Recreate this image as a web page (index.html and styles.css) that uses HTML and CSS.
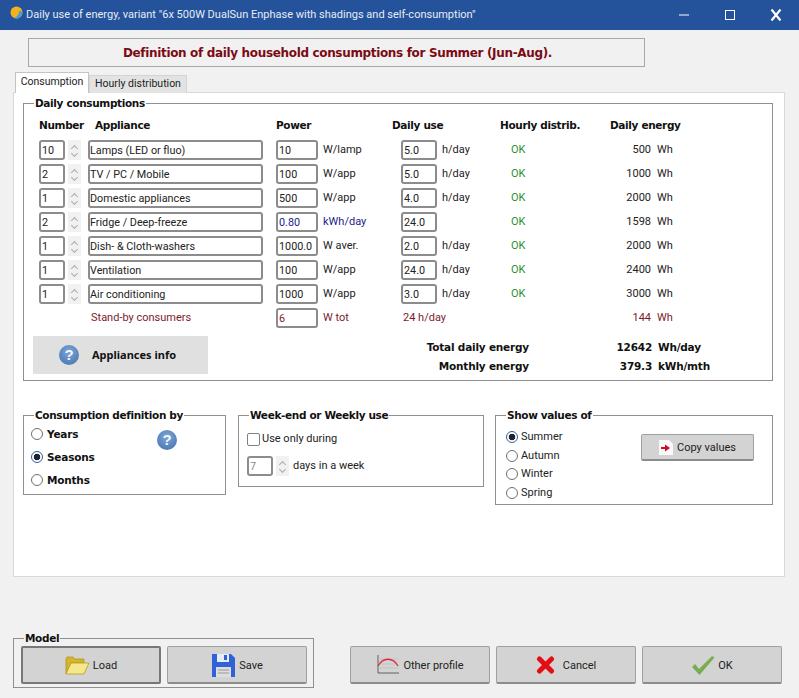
FILE: index.html
```html
<!DOCTYPE html>
<html lang="en">
<head>
<meta charset="utf-8">
<title>Daily use of energy</title>
<link rel="stylesheet" href="styles.css">
</head>
<body>
<header class="titlebar">
  <svg class="app-icon" width="13" height="13" viewBox="0 0 13 13"><circle cx="6.5" cy="6.5" r="6" fill="#f5b21a"/><path d="M12.5 6.5a6 6 0 0 1-8.5 5.4C7 11 9 8.500 9 5.200c1.500-.5 2.800 0 3.500 1.300z" fill="#4d9bd6"/></svg>
  <span class="title-text">Daily use of energy, variant "6x 500W DualSun Enphase with shadings and self-consumption"</span>
  <div class="win-controls">
    <svg width="12" height="12" viewBox="0 0 12 12"><path d="M1 6h10" stroke="#fff" stroke-width="1"/></svg>
    <svg width="12" height="12" viewBox="0 0 12 12"><rect x="1.500" y="1.500" width="9" height="9" fill="none" stroke="#fff"/></svg>
    <svg width="12" height="12" viewBox="0 0 12 12"><path d="M1.500 .5 10.500 11.500M10.500 .5 1.500 11.500" stroke="#fff" stroke-width="2.200"/></svg>
  </div>
</header>

<h1 class="banner">Definition of daily household consumptions for Summer (Jun-Aug).</h1>

<nav class="tabs">
  <div class="tab tab-active">Consumption</div>
  <div class="tab">Hourly distribution</div>
</nav>

<main class="panel">
  <section class="group group-daily">
    <div class="legend">Daily consumptions</div>
    <div class="table-head">
      <span class="h-number">Number</span>
      <span class="h-appliance">Appliance</span>
      <span class="h-power">Power</span>
      <span class="h-use">Daily use</span>
      <span class="h-dist">Hourly distrib.</span>
      <span>Daily energy</span>
    </div>
    <div class="rows">
      <div class="row">
        <input class="field" value="10"><div class="spin"><i></i><i class="down"></i></div>
        <input class="field" value="Lamps (LED or fluo)"><input class="field" value="10">
        <span class="unit">W/lamp</span><input class="field" value="5.0"><span class="unit">h/day</span>
        <span class="ok">OK</span><span class="energy">500</span><span class="unit">Wh</span>
      </div>
      <div class="row">
        <input class="field" value="2"><div class="spin"><i></i><i class="down"></i></div>
        <input class="field" value="TV / PC / Mobile"><input class="field" value="100">
        <span class="unit">W/app</span><input class="field" value="5.0"><span class="unit">h/day</span>
        <span class="ok">OK</span><span class="energy">1000</span><span class="unit">Wh</span>
      </div>
      <div class="row">
        <input class="field" value="1"><div class="spin"><i></i><i class="down"></i></div>
        <input class="field" value="Domestic appliances"><input class="field" value="500">
        <span class="unit">W/app</span><input class="field" value="4.0"><span class="unit">h/day</span>
        <span class="ok">OK</span><span class="energy">2000</span><span class="unit">Wh</span>
      </div>
      <div class="row">
        <input class="field" value="2"><div class="spin"><i></i><i class="down"></i></div>
        <input class="field" value="Fridge / Deep-freeze"><input class="field blue" value="0.80">
        <span class="unit blue">kWh/day</span><input class="field" value="24.0"><span class="unit"></span>
        <span class="ok">OK</span><span class="energy">1598</span><span class="unit">Wh</span>
      </div>
      <div class="row">
        <input class="field" value="1"><div class="spin"><i></i><i class="down"></i></div>
        <input class="field" value="Dish- &amp; Cloth-washers"><input class="field" value="1000.0">
        <span class="unit">W aver.</span><input class="field" value="2.0"><span class="unit">h/day</span>
        <span class="ok">OK</span><span class="energy">2000</span><span class="unit">Wh</span>
      </div>
      <div class="row">
        <input class="field" value="1"><div class="spin"><i></i><i class="down"></i></div>
        <input class="field" value="Ventilation"><input class="field" value="100">
        <span class="unit">W/app</span><input class="field" value="24.0"><span class="unit">h/day</span>
        <span class="ok">OK</span><span class="energy">2400</span><span class="unit">Wh</span>
      </div>
      <div class="row">
        <input class="field" value="1"><div class="spin"><i></i><i class="down"></i></div>
        <input class="field" value="Air conditioning"><input class="field" value="1000">
        <span class="unit">W/app</span><input class="field" value="3.0"><span class="unit">h/day</span>
        <span class="ok">OK</span><span class="energy">3000</span><span class="unit">Wh</span>
      </div>
      <div class="row maroon">
        <span class="standby-label">Stand-by consumers</span>
        <input class="field maroon" value="6">
        <span class="unit">W tot</span><span class="standby-hours">24 h/day</span>
        <span class="energy">144</span><span class="unit">Wh</span>
      </div>
    </div>
    <div class="summary">
      <div class="info-btn"><span class="help">?</span><span>Appliances info</span></div>
      <div class="totals">
        <span>Total daily energy</span><span class="total-value">12642</span><span>Wh/day</span>
        <span>Monthly energy</span><span class="total-value">379.3</span><span>kWh/mth</span>
      </div>
    </div>
  </section>

  <div class="options">
    <section class="group group-def">
      <div class="legend">Consumption definition by</div>
      <div class="def-body">
        <div class="def-radios">
          <label class="radio-line"><input type="radio" name="def">Years</label>
          <label class="radio-line"><input type="radio" name="def" checked>Seasons</label>
          <label class="radio-line"><input type="radio" name="def">Months</label>
        </div>
        <span class="help def-help">?</span>
      </div>
    </section>
    <section class="group group-week">
      <div class="legend">Week-end or Weekly use</div>
      <label class="check-line"><input type="checkbox">Use only during</label>
      <div class="days-line">
        <input class="field field-disabled" value="7" disabled>
        <div class="spin"><i></i><i class="down"></i></div>
        <span>days in a week</span>
      </div>
    </section>
    <section class="group group-show">
      <div class="legend">Show values of</div>
      <div class="show-body">
        <div class="show-radios">
          <label class="radio-small"><input type="radio" name="show" checked>Summer</label>
          <label class="radio-small"><input type="radio" name="show">Autumn</label>
          <label class="radio-small"><input type="radio" name="show">Winter</label>
          <label class="radio-small"><input type="radio" name="show">Spring</label>
        </div>
        <button class="btn btn-copy">
          <svg width="14" height="15" viewBox="0 0 14 15"><path d="M0 0h10l4 4v11H0z" fill="#fafafa"/><path d="M2 7h4V4.500L11 8 6 11.500V9H2z" fill="#cc1020"/></svg>
          Copy values
        </button>
      </div>
    </section>
  </div>
</main>

<footer class="footer">
  <section class="group group-model">
    <div class="legend">Model</div>
    <div class="model-btns">
      <button class="btn btn-big btn-default">
        <svg width="25" height="19" viewBox="0 0 25 19"><path d="M1 18V3l1-2h6l2 2h9v4H6z" fill="#d6b52e" stroke="#a98f1f" stroke-width=".7"/><path d="M1 18 6 7h18l-5 11z" fill="#f5e88a" stroke="#b79b26" stroke-width=".8"/></svg>
        Load
      </button>
      <button class="btn btn-big">
        <svg width="25" height="25" viewBox="0 0 25 25"><path d="M1 1h19l4 4v19H1z" fill="#2f62d8"/><rect x="6" y="1" width="12" height="8" fill="#e8ecf5"/><rect x="13" y="2" width="3" height="5" fill="#2f62d8"/><rect x="5" y="14" width="15" height="10" fill="#ddd"/><path d="M7 17h11M7 20h11" stroke="#999"/></svg>
        Save
      </button>
    </div>
  </section>
  <div class="actions">
    <button class="btn btn-big">
      <svg width="24" height="20" viewBox="0 0 24 20"><path d="M2 0v18h21" fill="none" stroke="#444" stroke-width=".8"/><path d="M2 4h20M2 9h20M2 13h20" stroke="#bbb" stroke-width=".7"/><path d="M2 11C7 2 17 2 22 11" fill="none" stroke="#e0263a" stroke-width="1.300"/></svg>
      Other profile
    </button>
    <button class="btn btn-big btn-cancel">
      <svg width="19" height="18" viewBox="0 0 19 18"><path d="M3.500 3 15.500 15M15.500 3 3.500 15" stroke="#e30e14" stroke-width="5" stroke-linecap="round"/></svg>
      Cancel
    </button>
    <button class="btn btn-big">
      <svg width="24" height="21" viewBox="0 0 24 21"><path d="M1 12l3-3 4 5L21 1l2.500 1.500L8.500 20z" fill="#79ad4f"/></svg>
      OK
    </button>
  </div>
</footer>
</body>
</html>
```
FILE: styles.css
```css
* { box-sizing: border-box; }
html, body { margin: 0; padding: 0; }
body {
  width: 799px;
  height: 698px;
  overflow: hidden;
  background: #f1f1f1;
  color: #222;
  font: 11px/16px Roboto, sans-serif;
}

.titlebar {
  display: flex;
  align-items: center;
  height: 30px;
  padding-left: 10px;
  background: #24529b;
  color: #e6ecf5;
}
.app-icon { margin-right: 3px; margin-top: -6px; }
.title-text { font-size: 11px; }
.win-controls {
  display: flex;
  gap: 34px;
  margin-left: auto;
  margin-right: 17px;
  align-items: center;
}

.banner {
  display: flex;
  align-items: center;
  justify-content: center;
  width: 617px;
  height: 29px;
  margin: 8px 0 0 28px;
  padding-left: 2px;
  border: 1px solid #a8a8a8;
  color: #7c0a14;
  font: bold 12px/16px "DejaVu Sans", sans-serif;
  letter-spacing: -.34px;
}

.tabs {
  display: flex;
  align-items: flex-end;
  margin: 5px 0 -1px 15px;
  position: relative;
}
.tab {
  width: 98px;
  height: 18px;
  padding: 0;
  background: #e3e3e3;
  border: 1px solid #d4d4d4;
  border-bottom: 0;
  font-size: 10.5px;
  line-height: 16px;
  text-align: center;
}
.tab-active {
  height: 21px;
  width: 74px;
  background: #fff;
  border-color: #c4c4c4;
  line-height: 18px;
  position: relative;
  z-index: 1;
}

.panel {
  width: 772px;
  height: 485px;
  margin-left: 13px;
  padding: 10px 9px;
  background: #fff;
  border: 1px solid #d9d9d9;
}

.group {
  border: 1px solid #8f8f8f;
}
.legend {
  width: fit-content;
  height: 14px;
  margin: -8px 0 0 10px;
  padding: 0 1px;
  background: #fff;
  color: #111;
  font: bold 10.5px/15px "DejaVu Sans", sans-serif;
  letter-spacing: -.35px;
}

.group-daily { width: 750px; height: 278px; }
.table-head {
  display: flex;
  margin-top: 7px;
  padding-left: 15px;
  font: bold 10.5px/16px "DejaVu Sans", sans-serif;
  letter-spacing: -.35px;
  color: #111;
}
.table-head span { display: block; }
.h-number { width: 56px; }
.h-appliance { width: 181px; }
.h-power { width: 116px; }
.h-use { width: 108px; }
.h-dist { width: 110px; }

.rows {
  display: flex;
  flex-direction: column;
  gap: 4px;
  margin-top: 7px;
}
.row {
  display: grid;
  grid-template-columns: 29px 20px 188px 47px 78px 41px 58px 80px 71px auto;
  align-items: center;
  height: 20px;
  padding-left: 15px;
}
.field {
  width: 26px;
  height: 20px;
  padding: 0 0 0 1px;
  background: #fff;
  border: 2px solid #8c8c8c;
  border-radius: 3px;
  color: #222;
  font: 10.8px Roboto, sans-serif;
  outline: none;
}
.row .field:nth-of-type(2) { width: 175px; padding-left: 0; }
.row .field:nth-of-type(3) { width: 42px; }
.row .field:nth-of-type(4) { width: 36px; }
.field.blue { color: #1c1c8c; }
.field.maroon { color: #7c1c2c; }
.row.maroon .field { width: 42px; grid-column: 4; }
.blue { color: #1c1c8c; }
.maroon { color: #7c1c2c; }
.ok { padding-left: 11px; color: #2f8f2f; }
.energy { text-align: right; }
.row > .unit:last-child { padding-left: 6px; }
.standby-label { grid-column: 1 / span 3; padding-left: 52px; }
.standby-hours { grid-column: 6 / span 3; padding-left: 2px; }
.row.maroon .energy { grid-column: 9; }

.spin {
  display: flex;
  flex-direction: column;
  align-items: center;
  justify-content: space-around;
  width: 13px;
  height: 20px;
  padding: 3px 0;
  background: #f1f1f1;
}
.spin i {
  display: block;
  width: 5px;
  height: 5px;
  margin-top: 2px;
  border-left: 1px solid #aaa;
  border-top: 1px solid #aaa;
  transform: rotate(45deg);
}
.spin i.down { margin-top: -2px; transform: rotate(225deg); }

.summary {
  display: flex;
  margin-top: 8px;
  padding-left: 9px;
}
.info-btn {
  display: flex;
  align-items: center;
  width: 175px;
  height: 38px;
  padding-left: 26px;
  gap: 13px;
  background: #e0e0e0;
  color: #111;
  font: bold 11px/16px "Noto Sans", sans-serif;
}
.help {
  display: inline-block;
  flex: none;
  width: 20px;
  height: 20px;
  border-radius: 50%;
  background: radial-gradient(circle at 50% 35%, #7fa6d6, #3f70ad);
  color: #f4f7fb;
  font: bold 15px/20px "Liberation Sans", sans-serif;
  text-align: center;
}
.totals {
  display: grid;
  grid-template-columns: 321px 123px auto;
  grid-auto-rows: 19px;
  margin-top: 2px;
  font: bold 10.5px/19px "DejaVu Sans", sans-serif;
  letter-spacing: -.2px;
  color: #111;
}
.totals span:nth-child(3n+1) { text-align: right; }
.total-value { text-align: right; }
.totals span:nth-child(3n) { padding-left: 6px; }

.options {
  display: flex;
  align-items: flex-start;
  margin-top: 34px;
}
.group-def { width: 203px; height: 80px; margin-right: 12px; }
.group-week { width: 246px; height: 72px; margin-right: 11px; }
.group-show { width: 278px; height: 90px; }

.def-body { display: flex; padding-left: 7px; }
.def-radios { width: 126px; }
.def-help { margin-top: 8px; }
input[type=radio] {
  appearance: none;
  width: 12px;
  height: 12px;
  margin: 0 4px 0 0;
  flex: none;
  background: #fff;
  border: 1px solid #6f6f6f;
  border-radius: 50%;
}
input[type=radio]:checked {
  border: 1.5px solid #2f6296;
  background: radial-gradient(circle, #223 0 3px, #fff 3.6px);
}
input[type=checkbox] {
  appearance: none;
  width: 13px;
  height: 13px;
  margin: 0 2px 0 0;
  background: #fff;
  border: 1.5px solid #808080;
  border-radius: 2px;
}
.radio-line {
  display: flex;
  align-items: center;
  height: 23px;
  font: bold 10.5px/16px "DejaVu Sans", sans-serif;
  letter-spacing: -.2px;
  color: #111;
}

.check-line {
  display: flex;
  align-items: center;
  height: 16px;
  margin: 9px 0 0 8px;
}
.days-line {
  display: flex;
  align-items: center;
  height: 20px;
  margin: 9px 0 0 8px;
}
.field-disabled { color: #888; }
.days-line .spin { margin: 0 4px 0 3px; }

.show-body { display: flex; padding-left: 10px; }
.show-radios { width: 135px; margin-top: 6px; }
.radio-small {
  display: flex;
  align-items: center;
  height: 18.500px;
}
.radio-small input { margin-right: 3px; }

.btn {
  display: flex;
  align-items: center;
  justify-content: center;
  gap: 3px;
  padding: 1px 0 0;
  background: #d3d3d3;
  border: 1px solid #a0a0a0;
  border-bottom: 2px solid #8c8c8c;
  border-radius: 2px;
  color: #222;
  font: 11px Roboto, sans-serif;
}
.btn-copy { width: 113px; height: 27px; margin-top: 12px; gap: 4px; }
.btn-big { width: 140px; height: 38px; }
.btn-default { border: 2px solid #777; }
.btn-cancel { gap: 8px; }

.footer {
  display: flex;
  align-items: flex-start;
  margin: 61px 0 0 13px;
}
.group-model {
  width: 301px;
  height: 50px;
}
.group-model .legend { background: #f1f1f1; line-height: 14px; }
.model-btns {
  display: flex;
  gap: 6px;
  margin: 1px 0 0 7px;
}
.actions {
  display: flex;
  gap: 6px;
  margin: 8px 0 0 36px;
}
```
